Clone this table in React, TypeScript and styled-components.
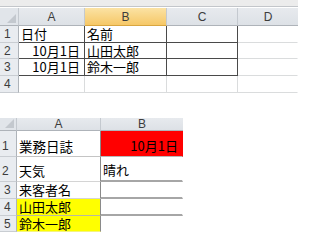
import React from "react";
import styled, { createGlobalStyle } from "styled-components";

const Global = createGlobalStyle`
  html, body { margin: 0; padding: 0; background: #ffffff; }
  body { width: 320px; height: 240px; overflow: hidden; }
`;

const Page = styled.div`
  width: 320px;
  height: 240px;
  display: flex;
  flex-direction: column;
  background: #fff;
`;

const Strip = styled.div`
  width: 298px;
  height: 6px;
  background: #ececec;
  border-bottom: 1px solid #c3c6ca;
  box-sizing: content-box;
  margin-bottom: 1px;
`;

const Sheet = styled.div<{ $cols: string; $rows: string; $top?: number }>`
  display: grid;
  grid-template-columns: ${(p) => p.$cols};
  grid-template-rows: ${(p) => p.$rows};
  margin-top: ${(p) => p.$top ?? 0}px;
  width: max-content;
`;

const Corner = styled.div`
  position: relative;
  background: #e1e5ea;
  border-right: 1px solid #c4c9cf;
  border-bottom: 1px solid #aeb3b9;
  box-sizing: border-box;
  &::after {
    content: "";
    position: absolute;
    right: 2px;
    bottom: 2px;
    width: 0;
    height: 0;
    border-left: 9px solid transparent;
    border-bottom: 9px solid #c3c8ce;
  }
`;

const ColHeader = styled.div<{ $selected?: boolean; $last?: boolean }>`
  display: flex;
  align-items: center;
  justify-content: center;
  box-sizing: border-box;
  background: ${(p) =>
    p.$selected ? "linear-gradient(#fbe2a4, #f6c867)" : "linear-gradient(#e7eaee, #dde1e6)"};
  border-right: ${(p) => (p.$last ? "0" : "1px solid #c4c9cf")};
  border-bottom: 1px solid ${(p) => (p.$selected ? "#d9a640" : "#aeb3b9")};
  font-family: "Liberation Sans", Arial, sans-serif;
  font-size: 12px;
  color: #3c3c3c;
  line-height: 12px;
`;

const RowHeader = styled.div<{ $bottom?: boolean }>`
  display: flex;
  align-items: ${(p) => (p.$bottom ? "flex-end" : "center")};
  justify-content: flex-start;
  padding-left: ${(p) => (p.$bottom ? 2 : 4)}px;
  padding-bottom: ${(p) => (p.$bottom ? 4 : 0)}px;
  box-sizing: border-box;
  background: #e9ecf0;
  border-right: 1px solid #aeb3b9;
  border-bottom: 1px solid #c9cdd2;
  font-family: "Liberation Sans", Arial, sans-serif;
  font-size: 12px;
  color: #3c3c3c;
  line-height: 12px;
`;

const Cell = styled.div<{
  $bg?: string;
  $align?: "left" | "right";
  $r?: string;
  $b?: string;
  $bw?: number;
  $bottom?: boolean;
  $big?: boolean;
}>`
  display: flex;
  align-items: ${(p) => (p.$bottom ? "flex-end" : "center")};
  justify-content: ${(p) => (p.$align === "right" ? "flex-end" : "flex-start")};
  padding: 0 ${(p) => (p.$align === "right" ? 4 : 0)}px
    ${(p) => (p.$bottom ? 3 : 0)}px ${(p) => (p.$align === "right" ? 0 : 2)}px;
  box-sizing: border-box;
  background: ${(p) => p.$bg ?? "#ffffff"};
  border-right: 1px solid ${(p) => p.$r ?? "#dadcdd"};
  border-bottom: ${(p) => p.$bw ?? 1}px solid ${(p) => p.$b ?? "#dadcdd"};
  font-family: "Noto Sans CJK JP", "Liberation Sans", sans-serif;
  font-size: ${(p) => (p.$big ? 13.5 : 13)}px;
  line-height: 14px;
  color: #000;
  white-space: nowrap;
`;

const DARK = "#4a4a4a";

export default function App() {
  return (
    <Page>
      <Global />
      <Strip />
      <Sheet $cols="19px 66px 82px 71px 60px" $rows="18px 17px 16px 17px 17px">
        <Corner />
        <ColHeader>A</ColHeader>
        <ColHeader $selected>B</ColHeader>
        <ColHeader>C</ColHeader>
        <ColHeader $last>D</ColHeader>

        <RowHeader>1</RowHeader>
        <Cell $r={DARK} $b={DARK}>日付</Cell>
        <Cell $r={DARK} $b={DARK}>名前</Cell>
        <Cell $r={DARK} $b={DARK} />
        <Cell $r="transparent" />

        <RowHeader>2</RowHeader>
        <Cell $align="right" $r={DARK} $b={DARK}>10月1日</Cell>
        <Cell $r={DARK} $b={DARK}>山田太郎</Cell>
        <Cell $r={DARK} $b={DARK} />
        <Cell $r="transparent" />

        <RowHeader>3</RowHeader>
        <Cell $align="right" $r={DARK} $b={DARK}>10月1日</Cell>
        <Cell $r={DARK} $b={DARK}>鈴木一郎</Cell>
        <Cell $r={DARK} $b={DARK} />
        <Cell $r="transparent" />

        <RowHeader>4</RowHeader>
        <Cell />
        <Cell />
        <Cell />
        <Cell $r="transparent" />
      </Sheet>

      <Sheet $top={25} $cols="17px 84px 82px" $rows="13px 26px 25px 17px 17px 16px">
        <Corner />
        <ColHeader>A</ColHeader>
        <ColHeader $last>B</ColHeader>

        <RowHeader $bottom>1</RowHeader>
        <Cell $bottom $big $r="#8a8a8a" $b="#c4c4c4">業務日誌</Cell>
        <Cell $bottom $align="right" $bg="#ff0000" $r="transparent" $b="#b8b8b8">10月1日</Cell>

        <RowHeader $bottom>2</RowHeader>
        <Cell $bottom $r="#8a8a8a" $b="#d4d4d4">天気</Cell>
        <Cell $bottom $r="transparent" $b="#a6a6a6" $bw={2}>晴れ</Cell>

        <RowHeader>3</RowHeader>
        <Cell $r="#8a8a8a" $b="#d4d4d4">来客者名</Cell>
        <Cell $r="transparent" $b="#a6a6a6" $bw={2} />

        <RowHeader>4</RowHeader>
        <Cell $bg="#ffff00" $r="#8a8a8a" $b="#b8b8a0">山田太郎</Cell>
        <Cell $r="transparent" $b="#a6a6a6" $bw={2} />

        <RowHeader>5</RowHeader>
        <Cell $bg="#ffff00" $r="#8a8a8a" $b="#f4f480">鈴木一郎</Cell>
        <Cell $r="transparent" $b="transparent" />
      </Sheet>
    </Page>
  );
}
